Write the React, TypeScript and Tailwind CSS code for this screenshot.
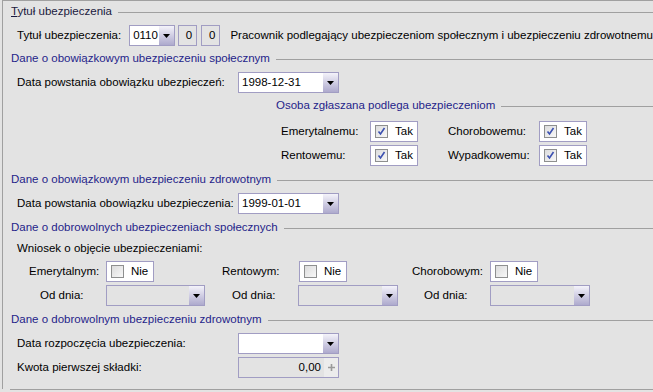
import React from "react";

const font = { fontFamily: '"Liberation Sans", Arial, sans-serif' };

function Arrow() {
  return (
    <svg width="7" height="4" viewBox="0 0 7 4">
      <path d="M0 0h7L3.5 4z" fill="#000" />
    </svg>
  );
}

function Combo({ value, w, disabled }: { value?: string; w: string; disabled?: boolean }) {
  return (
    <div className={`flex h-[21px] ${w} border border-[#a19dc3] ${disabled ? "bg-[#e3e3e3]" : "bg-white"}`}>
      <div className="flex-1 pl-[3px] leading-[19px] text-black">{value}</div>
      <div className="w-[15px] flex items-center justify-center bg-gradient-to-b from-[#f4f3fa] to-[#aeaacd]">
        <Arrow />
      </div>
    </div>
  );
}

function Check({ checked, label }: { checked: boolean; label: string }) {
  return (
    <div className="flex items-center h-[21px] w-[48px] border border-[#a19dc3] bg-white pl-[4px]">
      <div className="w-[13px] h-[13px] border border-[#8e8f8f] bg-gradient-to-br from-[#dcdcdc] to-[#f8f8f8] flex items-center justify-center">
        {checked && (
          <svg width="9" height="9" viewBox="0 0 9 9">
            <path d="M1.5 4.5l2 2.5L7.5 1" stroke="#3b50b0" strokeWidth="1.6" fill="none" />
          </svg>
        )}
      </div>
      <span className="ml-[7px] text-black">{label}</span>
    </div>
  );
}

function Header({ title, left = "ml-[8px]", dark }: { title: React.ReactNode; left?: string; dark?: boolean }) {
  return (
    <div className={`flex items-center h-[14px] ${left}`}>
      <span className={dark ? "text-[#1a1a40]" : "text-[#25238a]"}>{title}</span>
      <div className="flex-1 h-px bg-[#a0a0a0] ml-[6px]" />
    </div>
  );
}

export default function App() {
  return (
    <div className="w-[653px] h-[392px] bg-[#e3e3e3] overflow-hidden text-[11.5px] text-black" style={font}>
      <div className="ml-[2px] h-[389px] border-l border-t border-[#a0a0a0] flex flex-col">
        <div className="mt-[4px]">
          <Header dark title={<><span className="underline">T</span>ytuł ubezpieczenia</>} />
        </div>

        <div className="mt-[6px] flex items-center h-[21px] ml-[14px] whitespace-nowrap">
          <div className="w-[118px]">Tytuł ubezpieczenia:</div>
          <Combo value="0110" w="w-[48px]" />
          <div className="ml-[3px] w-[20px] h-[21px] border border-[#a19dc3] text-right pr-[4px] leading-[19px]">0</div>
          <div className="ml-[4px] w-[20px] h-[21px] border border-[#a19dc3] text-right pr-[4px] leading-[19px]">0</div>
          <div className="ml-[10px]">Pracownik podlegający ubezpieczeniom społecznym i ubezpieczeniu zdrowotnemu</div>
        </div>

        <div className="mt-[6px]">
          <Header title="Dane o obowiązkowym ubezpieczeniu społecznym" />
        </div>
        <div className="mt-[6px] flex items-center h-[21px] ml-[14px]">
          <div className="w-[221px]">Data powstania obowiązku ubezpieczeń:</div>
          <Combo value="1998-12-31" w="w-[101px]" />
        </div>

        <div className="mt-[6px]">
          <Header title="Osoba zgłaszana podlega ubezpieczeniom" left="ml-[273px]" />
        </div>
        <div className="mt-[8px] flex items-center h-[21px] ml-[278px]">
          <div className="w-[89px]">Emerytalnemu:</div>
          <Check checked label="Tak" />
          <div className="ml-[30px] w-[91px]">Chorobowemu:</div>
          <Check checked label="Tak" />
        </div>
        <div className="mt-[3px] flex items-center h-[21px] ml-[278px]">
          <div className="w-[89px]">Rentowemu:</div>
          <Check checked label="Tak" />
          <div className="ml-[30px] w-[91px]">Wypadkowemu:</div>
          <Check checked label="Tak" />
        </div>

        <div className="mt-[7px]">
          <Header title="Dane o obowiązkowym ubezpieczeniu zdrowotnym" />
        </div>
        <div className="mt-[6px] flex items-center h-[21px] ml-[14px]">
          <div className="w-[221px]">Data powstania obowiązku ubezpieczenia:</div>
          <Combo value="1999-01-01" w="w-[101px]" />
        </div>

        <div className="mt-[7px]">
          <Header title="Dane o dobrowolnych ubezpieczeniach społecznych" />
        </div>
        <div className="mt-[6px] h-[14px] leading-[14px] ml-[14px]">Wniosek o objęcie ubezpieczeniami:</div>

        <div className="mt-[6px] flex items-center h-[21px] ml-[26px]">
          <div className="w-[77px]">Emerytalnym:</div>
          <Check checked={false} label="Nie" />
          <div className="ml-[68px] w-[77px]">Rentowym:</div>
          <Check checked={false} label="Nie" />
          <div className="ml-[65px] w-[78px]">Chorobowym:</div>
          <Check checked={false} label="Nie" />
        </div>
        <div className="mt-[3px] flex items-center h-[21px] ml-[37px]">
          <div className="w-[66px]">Od dnia:</div>
          <Combo w="w-[99px]" disabled />
          <div className="ml-[27px] w-[66px]">Od dnia:</div>
          <Combo w="w-[100px]" disabled />
          <div className="ml-[26px] w-[66px]">Od dnia:</div>
          <Combo w="w-[100px]" disabled />
        </div>

        <div className="mt-[7px]">
          <Header title="Dane o dobrowolnym ubezpieczeniu zdrowotnym" />
        </div>
        <div className="mt-[6px] flex items-center h-[21px] ml-[14px]">
          <div className="w-[221px]">Data rozpoczęcia ubezpieczenia:</div>
          <Combo w="w-[101px]" />
        </div>
        <div className="mt-[3px] flex items-center h-[21px] ml-[14px]">
          <div className="w-[221px]">Kwota pierwszej składki:</div>
          <div className="flex h-[21px] w-[101px] border border-[#a19dc3] bg-[#e3e3e3]">
            <div className="flex-1 text-right pr-[3px] leading-[19px]">0,00</div>
            <div className="w-[14px] bg-[#ececec] flex items-center justify-center">
              <svg width="7" height="7" viewBox="0 0 7 7">
                <path d="M3.5 0v7M0 3.5h7" stroke="#9a9a9a" strokeWidth="1.6" />
              </svg>
            </div>
          </div>
        </div>
      </div>
      <div className="ml-[10px] h-px bg-[#a0a0a0]" />
    </div>
  );
}
